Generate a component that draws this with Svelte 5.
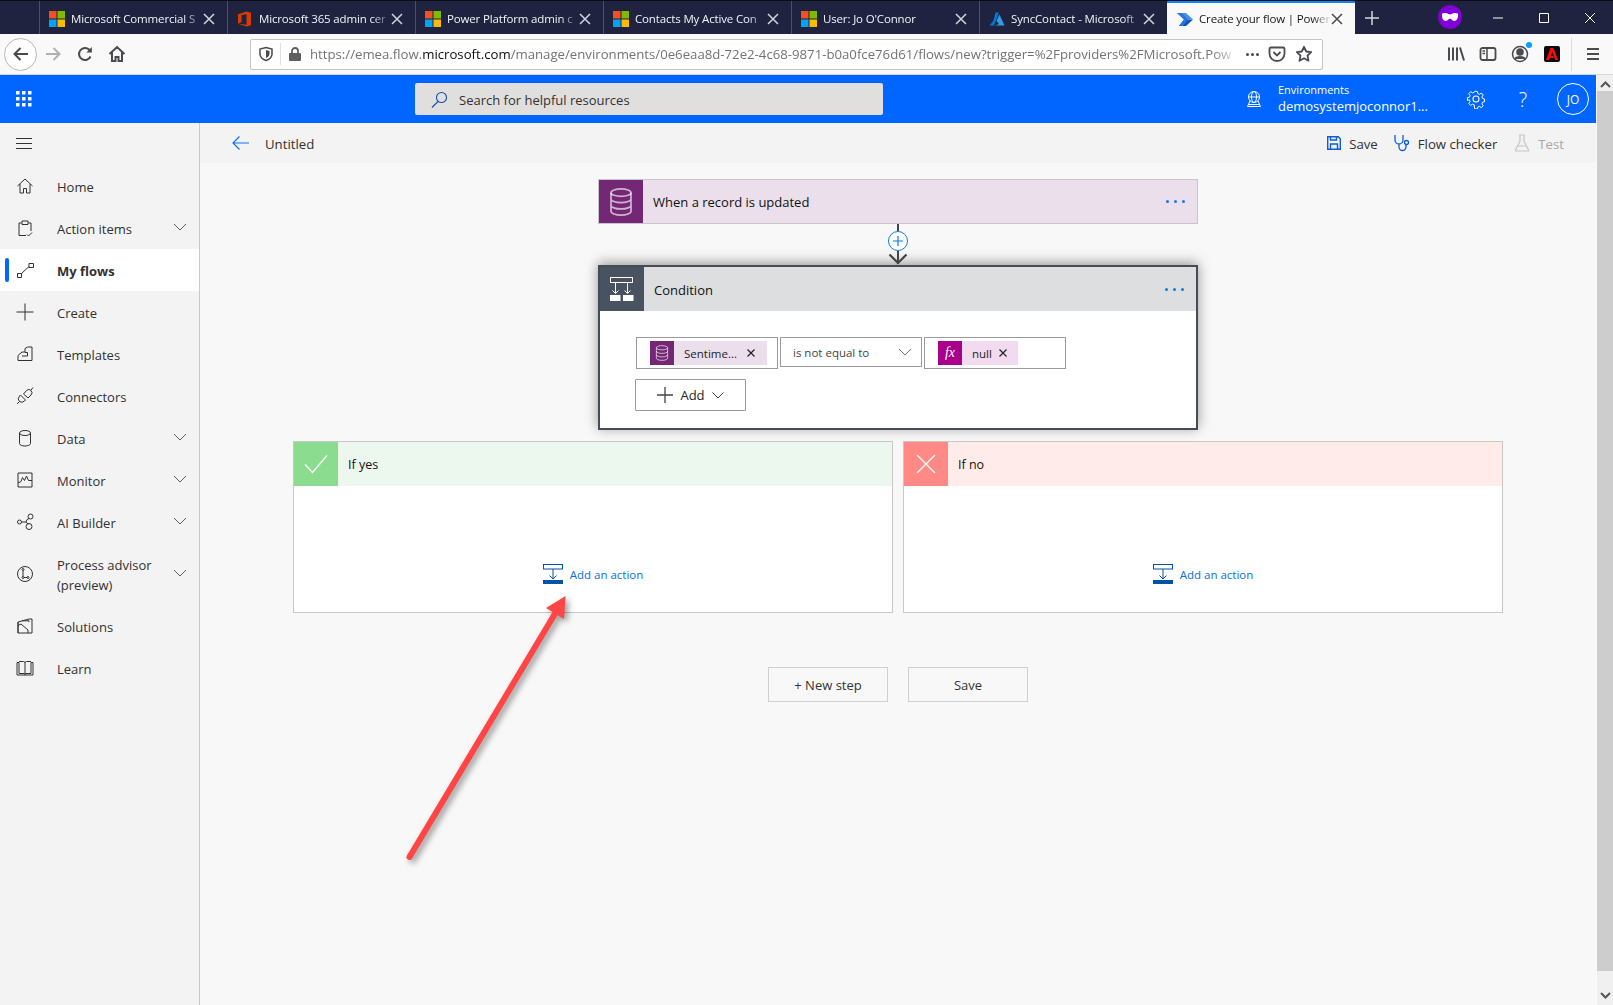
<script>
  const tabs = [
    { title: "Microsoft Commercial S", icon: "ms" },
    { title: "Microsoft 365 admin cer", icon: "office" },
    { title: "Power Platform admin c", icon: "ms" },
    { title: "Contacts My Active Con", icon: "ms" },
    { title: "User: Jo O'Connor", icon: "ms" },
    { title: "SyncContact - Microsoft", icon: "azure" },
    { title: "Create your flow | Power", icon: "flow", active: true }
  ];

  const nav = [
    { label: "Home", d: "M2.500 10L10 3l7.500 7M5 8v9h3.500v-4.500h3V17H15V8" },
    { label: "Action items", chevron: true, d: "M6.500 5H4v12.500h7M13.500 5H16v8M7 3h6v3.500H7zM12 16.500l1.500 1.500 3.500-3.500" },
    { label: "My flows", active: true, d: "M2.500 13.500h4v4h-4zM14 3.500h4.500v4H14zM6.500 13.500L14 6.500" },
    { label: "Create", d: "M1.500 10h17M10 1.500v17" },
    { label: "Templates", d: "M3 16.500v-5L7 8h3V4.500L12.500 3H17v13.500zM7 12h5.500V8.500H10" },
    { label: "Connectors", d: "M2 18l2.500-2.500M4.500 15.500a4 4 0 0 1 0-5.500l1-1 5 5-1 1a4 4 0 0 1-5 .5zM8.500 8l3-3.500a3 3 0 0 1 4.500 4.500l-3 3zM16 4l2-2.500" },
    { label: "Data", chevron: true, d: "M4.500 5a5.500 2.500 0 0 1 11 0v10.500a5.500 2.500 0 0 1-11 0zM4.500 5a5.500 2.500 0 0 0 11 0" },
    { label: "Monitor", chevron: true, d: "M3 3h14v14H3zM3 13l3-1.500 1.500-4 2 3 2-4.500 2 4.500H17" },
    { label: "AI Builder", chevron: true, d: "M2.500 10a2 2 0 1 0 4 0a2 2 0 1 0-4 0M13 4.500a2.500 2.500 0 1 0 5 0a2.500 2.500 0 1 0-5 0M11 14.500a3 3 0 1 0 6 0a3 3 0 1 0-6 0M6.500 10h4.500a4 4 0 0 1 3-3.500M11 10a4 4 0 0 0 2.500 2" },
    { label: "Process advisor (preview)", chevron: true, tall: true, d: "M2.500 10a7.500 7.500 0 1 0 15 0a7.500 7.500 0 1 0-15 0M8 6.500v6M9 13.500h3M7 5.500a1 1 0 1 0 2 0a1 1 0 1 0-2 0M7 13.500a1 1 0 1 0 2 0a1 1 0 1 0-2 0M12 13.500a1 1 0 1 0 2 0a1 1 0 1 0-2 0" },
    { label: "Solutions", d: "M3 6l11-3h3v14H3zM3 6v11M3 9.500l3-1.500 7 6v3M7 4.800h7V6" },
    { label: "Learn", d: "M2 4.500h2V15.500h5c.6 0 1 .5 1 1 0-.5.4-1 1-1h5V4.500h2V17H2zM4 3.500h4.500c.8 0 1.500.5 1.500 1.500v11.500M16 3.500h-4.500c-.8 0-1.500.5-1.500 1.500" }
  ];
</script>

{#snippet favicon(kind)}
  {#if kind === "ms"}
    <svg class="fav" viewBox="0 0 16 16">
      <rect x="0" y="0" width="7.500" height="7.500" fill="#f25022" />
      <rect x="8.500" y="0" width="7.500" height="7.500" fill="#7fba00" />
      <rect x="0" y="8.500" width="7.500" height="7.500" fill="#00a4ef" />
      <rect x="8.500" y="8.500" width="7.500" height="7.500" fill="#ffb900" />
    </svg>
  {:else if kind === "office"}
    <svg class="fav" viewBox="0 0 16 16">
      <path d="M1 3.300L9.500 .5L14 1.800V14.200L9.500 15.500L1 12.700L9.500 13.800V3L4.500 4.300V11.200L1 12.700Z" fill="#d83b01" />
    </svg>
  {:else if kind === "azure"}
    <svg class="fav" viewBox="0 0 16 16">
      <path d="M6.500 1.500H10L5 14.500H0.500L4.500 9.500Z" fill="#0078d4" />
      <path d="M10.500 3.500L15.500 14.500H6L10 13L7.500 10Z" fill="#2f9de8" />
    </svg>
  {:else}
    <svg class="fav" viewBox="0 0 16 16">
      <path d="M0 2H9L16 8.500H7Z" fill="#4a90ee" />
      <path d="M2 15L7 8.500H16L9 15Z" fill="#0f54b8" />
      <path d="M0 2L7 8.500L2 15H6L11 8.500L5 2Z" fill="#2a73e0" />
    </svg>
  {/if}
{/snippet}

{#snippet dbIcon(size)}
  <svg width={size} height={size} viewBox="0 0 24 24" fill="none" stroke="#fff" stroke-opacity=".65" stroke-width="1.300">
    <ellipse cx="12" cy="5" rx="7.500" ry="2.800" />
    <path d="M4.500 5v14c0 1.500 3.400 2.800 7.500 2.800s7.500-1.300 7.500-2.800V5M4.500 9.700c0 1.500 3.400 2.800 7.500 2.800s7.500-1.300 7.500-2.800M4.500 14.400c0 1.500 3.400 2.800 7.500 2.800s7.500-1.300 7.500-2.800" />
  </svg>
{/snippet}

{#snippet actionIcon()}
  <svg width="20" height="20" viewBox="0 0 20 20" fill="none" stroke="#0054a6">
    <rect x=".5" y=".5" width="19" height="4.500" />
    <path d="M10 5v10M6.500 11.500L10 15l3.500-3.500" />
    <rect x="0" y="16" width="20" height="4" fill="#0054a6" stroke="none" />
  </svg>
{/snippet}

{#snippet dots()}
  <span class="dots"><i></i><i></i><i></i></span>
{/snippet}

<div class="page">
  <div class="tabbar">
    {#each tabs as tab}
      <div class="tab" class:active={tab.active}>
        {@render favicon(tab.icon)}
        <span class="tab-title">{tab.title}</span>
        <svg class="tab-x" width="12" height="12" viewBox="0 0 12 12"><path d="M1 1l10 10M11 1L1 11" /></svg>
      </div>
    {/each}
    <div class="newtab">
      <svg width="14" height="14" viewBox="0 0 14 14"><path d="M7 0v14M0 7h14" stroke="#d8d8e0" stroke-width="1.500" /></svg>
    </div>
    <div class="private">
      <svg width="18" height="10" viewBox="0 0 18 10"><path d="M1 1.500C4 .5 6 1 9 2.500 12 1 14 .5 17 1.500c.5 4-1 7.500-4 7.500-2 0-2.500-2.500-4-2.500S7 9 5 9C2 9 .5 5.500 1 1.500Z" fill="#fff" /></svg>
    </div>
    <div class="winbtn"><svg width="12" height="12" viewBox="0 0 12 12"><path d="M1 6h10" /></svg></div>
    <div class="winbtn"><svg width="12" height="12" viewBox="0 0 12 12"><path d="M1.500 1.500h9v9h-9z" /></svg></div>
    <div class="winbtn"><svg width="12" height="12" viewBox="0 0 12 12"><path d="M1 1l10 10M11 1L1 11" /></svg></div>
  </div>

  <div class="toolbar">
    <div class="back-btn">
      <svg width="18" height="18" viewBox="0 0 18 18" fill="none" stroke="#4a4a4f" stroke-width="2"><path d="M16 9H3M8.500 3L2.500 9l6 6" /></svg>
    </div>
    <div class="tool">
      <svg width="18" height="18" viewBox="0 0 18 18" fill="none" stroke="#b1b1b3" stroke-width="2"><path d="M2 9h13M9.500 3l6 6-6 6" /></svg>
    </div>
    <div class="tool">
      <svg width="18" height="18" viewBox="0 0 18 18" fill="none" stroke="#4a4a4f" stroke-width="2"><path d="M14.500 11.500A6 6 0 1 1 13 4.500l2 2" /><path d="M15.800 2v5.500h-5.500z" fill="#4a4a4f" stroke="none" /></svg>
    </div>
    <div class="tool">
      <svg width="18" height="18" viewBox="0 0 18 18" fill="none" stroke="#4a4a4f" stroke-width="2"><path d="M1.500 9L9 2l7.500 7M4 7.500V16h3.500v-4h3v4H14V7.500" /></svg>
    </div>

    <div class="urlbar">
      <svg class="shield" width="16" height="16" viewBox="0 0 16 16"><path d="M8 1.500L14 3v5c0 3.300-2.800 5.400-6 6.500C4.800 13.400 2 11.300 2 8V3Z" fill="none" stroke="#4a4a4f" stroke-width="1.500" /><path d="M8 4l3.500 1v3c0 2-1.700 3.300-3.500 4Z" fill="#4a4a4f" /></svg>
      <span class="url-sep"></span>
      <svg class="lock" width="12" height="14" viewBox="0 0 12 14"><path d="M3 6V4a3 3 0 0 1 6 0v2" fill="none" stroke="#5f5f62" stroke-width="1.800" /><rect x="0" y="6" width="12" height="8" rx="1" fill="#5f5f62" /></svg>
      <span class="url">https://emea.flow.<b>microsoft.com</b>/manage/environments/0e6eaa8d-72e2-4c68-9871-b0a0fce76d61/flows/new?trigger=%2Fproviders%2FMicrosoft.Pow</span>
      <span class="url-more"><i></i><i></i><i></i></span>
      <svg width="18" height="18" viewBox="0 0 18 18" fill="none" stroke="#4a4a4f" stroke-width="1.800"><path d="M3 2.500h12a1.500 1.500 0 0 1 1.500 1.500v4.500a7.500 7.500 0 0 1-15 0V4A1.500 1.500 0 0 1 3 2.500Z" /><path d="M5.500 7L9 10.500 12.500 7" /></svg>
      <svg class="star" width="18" height="18" viewBox="0 0 18 18" fill="none" stroke="#4a4a4f" stroke-width="1.800" stroke-linejoin="round"><path d="M9 1.800l2.200 4.700 5 .6-3.700 3.500 1 5.100L9 13.200l-4.500 2.500 1-5.100L1.800 7.100l5-.6Z" /></svg>
    </div>

    <div class="tool first-right">
      <svg width="18" height="18" viewBox="0 0 18 18" fill="none" stroke="#4a4a4f" stroke-width="2"><path d="M2 2.500v13M6 2.500v13M10 2.500v13M13 2.500l4 13" /></svg>
    </div>
    <div class="tool">
      <svg width="18" height="18" viewBox="0 0 18 18" fill="none" stroke="#4a4a4f" stroke-width="1.800"><rect x="1.500" y="3" width="15" height="12" rx="2" /><path d="M8 3v12M3.500 6H6M3.500 8.500H6" stroke-width="1.500" /></svg>
    </div>
    <div class="tool acct">
      <svg width="18" height="18" viewBox="0 0 18 18" fill="none" stroke="#4a4a4f" stroke-width="1.500"><circle cx="9" cy="9" r="7.500" /><circle cx="9" cy="7" r="3" fill="#4a4a4f" /><path d="M4 14c1-3 9-3 10 0" fill="#4a4a4f" /></svg>
      <span class="acct-dot"></span>
    </div>
    <div class="tool">
      <span class="adobe">
        <svg width="12" height="12" viewBox="0 0 12 12"><path d="M4.500 0h3L12 12H9.200L6.300 4 4.800 8H7l.8 2H4L3 12H0Z" fill="#f40f02" /></svg>
      </span>
    </div>
    <span class="tool-sep"></span>
    <div class="tool">
      <svg width="16" height="16" viewBox="0 0 16 16" stroke="#4a4a4f" stroke-width="2"><path d="M2 3h12M2 8h12M2 13h12" /></svg>
    </div>
  </div>

  <div class="app">
    <div class="app-main">
      <header class="topbar">
        <div class="waffle">
          <svg width="16" height="16" viewBox="0 0 16 16" fill="#fff">
            {#each [0, 6, 12] as y}
              {#each [0, 6, 12] as x}
                <rect {x} {y} width="3.500" height="3.500" />
              {/each}
            {/each}
          </svg>
        </div>
        <div class="search">
          <svg width="17" height="17" viewBox="0 0 17 17" fill="none" stroke="#0f4fb5" stroke-width="1.100"><circle cx="10.500" cy="6.500" r="5" /><path d="M7 10.500L1 16.500" /></svg>
          <span>Search for helpful resources</span>
        </div>
        <svg class="env-icon" width="18" height="18" viewBox="0 0 18 18" fill="none" stroke="#fff"><circle cx="9" cy="7" r="5.500" /><ellipse cx="9" cy="7" rx="2.500" ry="5.500" /><path d="M3.500 7h11M5 11l-2.500 5.500h13L13 11M3 14.500h12" /></svg>
        <div class="env">
          <div class="env-label">Environments</div>
          <div class="env-name">demosystemjoconnor1...</div>
        </div>
        <div class="top-btn">
          <svg width="20" height="20" viewBox="0 0 20 20" fill="none" stroke="#fff" stroke-width="1.100"><circle cx="10" cy="10" r="3" /><path d="M8.500 1.500h3l.5 2.500 1.800.8 2.200-1.400 2 2.100-1.400 2.200.7 1.800 2.200.5v3l-2.200.5-.7 1.800 1.400 2.200-2 2.100-2.200-1.400-1.800.7-.5 2.100h-3L8 16.400l-1.800-.7-2.200 1.400-2-2.100 1.400-2.200-.7-1.800L.5 11.500v-3L2.700 8l.7-1.800L2 4l2-2.100 2.200 1.400L8 2.500Z" transform="translate(1 1) scale(.9)" /></svg>
        </div>
        <div class="top-btn help">?</div>
        <div class="avatar">JO</div>
      </header>

      <div class="body">
        <nav class="sidebar">
          <div class="burger">
            <svg width="16" height="12" viewBox="0 0 16 12" stroke="#323130"><path d="M0 .5h16M0 5.500h16M0 10.500h16" /></svg>
          </div>
          {#each nav as item}
            <div class="nav-item" class:active={item.active} class:tall={item.tall}>
              <svg class="nav-icon" width="20" height="20" viewBox="0 0 20 20" fill="none" stroke="#323130"><path d={item.d} /></svg>
              <span class="nav-label">{item.label}</span>
              {#if item.chevron}
                <svg class="chev" width="14" height="8" viewBox="0 0 14 8" fill="none" stroke="#605e5c"><path d="M1 1l6 6 6-6" /></svg>
              {/if}
            </div>
          {/each}
        </nav>

        <main class="main">
          <div class="cmdbar">
            <svg width="17" height="14" viewBox="0 0 17 14" fill="none" stroke="#0f6fff" stroke-width="1.200"><path d="M17 7H1M7.500 .5L1 7l6.500 6.500" /></svg>
            <span class="flow-name">Untitled</span>
            <div class="cmd first">
              <svg width="14" height="14" viewBox="0 0 14 14" fill="none" stroke="#0b5ed7" stroke-width="1.400"><path d="M.7.700h10.600l2 2v10.600H.700zM3.500 13V8h7v5M3.500 1v3h6V1" /></svg>
              <span>Save</span>
            </div>
            <div class="cmd">
              <svg width="16" height="18" viewBox="0 0 16 18" fill="none" stroke="#0b5ed7" stroke-width="1.300"><path d="M1 1v5a4 4 0 0 0 8 0V1M5 10v3a3.500 3.500 0 0 0 7 0v-2" /><circle cx="12.500" cy="8.500" r="2" /></svg>
              <span>Flow checker</span>
            </div>
            <div class="cmd off">
              <svg width="16" height="18" viewBox="0 0 16 18" fill="none" stroke="#c8c6c4" stroke-width="1.200"><path d="M5 1h6M6 1v6L1.500 16c-.3.600 0 1 .5 1h12c.5 0 .8-.4.500-1L10 7V1M4 12h8" /></svg>
              <span>Test</span>
            </div>
          </div>

          <div class="canvas">
            <div class="card trigger">
              <div class="card-icon">{@render dbIcon(32)}</div>
              <span class="card-title">When a record is updated</span>
              {@render dots()}
            </div>

            <svg class="connector" width="24" height="41" viewBox="0 0 24 41" fill="none">
              <path d="M12 0v7M12 27v13" stroke="#444" stroke-width="2" />
              <path d="M3.500 30.500L12 39l8.500-8.500" stroke="#444" stroke-width="2.200" />
              <circle cx="12" cy="17" r="9.500" fill="#fff" stroke="#0a7ce8" />
              <path d="M7 17h10M12 12v10" stroke="#0a7ce8" stroke-width="1.200" />
            </svg>

            <div class="card condition">
              <div class="cond-head">
                <div class="card-icon dark">
                  <svg width="24" height="24" viewBox="0 0 24 24" fill="none" stroke="#fff">
                    <rect x=".5" y=".5" width="22" height="5" />
                    <path d="M5.500 6v10M17.500 6v10M2.500 13.500l3 3 3-3M14.500 13.500l3 3 3-3" />
                    <rect x="0" y="18" width="10.500" height="6" fill="#fff" stroke="none" />
                    <rect x="13" y="18" width="10.500" height="6" fill="#fff" stroke="none" />
                  </svg>
                </div>
                <span class="card-title">Condition</span>
                {@render dots()}
              </div>
              <div class="cond-body">
                <div class="cond-row">
                  <div class="field tall">
                    <span class="token">
                      <span class="token-icon db">{@render dbIcon(18)}</span>
                      <span class="token-text">Sentime...</span>
                      <svg class="token-x" width="8" height="8" viewBox="0 0 8 8" stroke="#222" stroke-width="1.200"><path d="M.5.500l7 7M7.500.500l-7 7" /></svg>
                    </span>
                  </div>
                  <div class="field select">
                    <span>is not equal to</span>
                    <svg width="14" height="8" viewBox="0 0 14 8" fill="none" stroke="#767676"><path d="M1 1l6 6 6-6" /></svg>
                  </div>
                  <div class="field tall">
                    <span class="token pink">
                      <span class="token-icon fx">fx</span>
                      <span class="token-text">null</span>
                      <svg class="token-x" width="8" height="8" viewBox="0 0 8 8" stroke="#222" stroke-width="1.200"><path d="M.5.500l7 7M7.500.500l-7 7" /></svg>
                    </span>
                  </div>
                </div>
                <div class="add-btn">
                  <svg width="16" height="16" viewBox="0 0 16 16" stroke="#444" stroke-width="1.300"><path d="M0 8h16M8 0v16" /></svg>
                  <span>Add</span>
                  <svg width="12" height="7" viewBox="0 0 12 7" fill="none" stroke="#444"><path d="M.5.500L6 6l5.500-5.500" /></svg>
                </div>
              </div>
            </div>

            <div class="branches">
              <div class="branch">
                <div class="branch-head yes">
                  <div class="branch-icon">
                    <svg width="24" height="20" viewBox="0 0 24 20" fill="none" stroke="#fff" stroke-width="1.300"><path d="M1 10.500L8.500 18.500 23 1.500" /></svg>
                  </div>
                  <span>If yes</span>
                </div>
                <div class="branch-body">
                  {@render actionIcon()}
                  <span>Add an action</span>
                </div>
              </div>
              <div class="branch">
                <div class="branch-head no">
                  <div class="branch-icon">
                    <svg width="20" height="20" viewBox="0 0 20 20" fill="none" stroke="#fff" stroke-width="1.300"><path d="M1 1l18 18M19 1L1 19" /></svg>
                  </div>
                  <span>If no</span>
                </div>
                <div class="branch-body">
                  {@render actionIcon()}
                  <span>Add an action</span>
                </div>
              </div>
            </div>

            <div class="foot">
              <div class="foot-btn">+ New step</div>
              <div class="foot-btn">Save</div>
            </div>
          </div>
        </main>
      </div>
    </div>

    <div class="scrollbar">
      <svg width="11" height="7" viewBox="0 0 11 7" fill="none" stroke="#555" stroke-width="2"><path d="M1 6l4.500-4.500L10 6" /></svg>
      <div class="thumb"></div>
      <svg width="11" height="7" viewBox="0 0 11 7" fill="none" stroke="#555" stroke-width="2"><path d="M1 1l4.500 4.500L10 1" /></svg>
    </div>
  </div>

  <!-- annotation drawn on top of the screenshot -->
  <svg class="annotation" width="1613" height="1005" viewBox="0 0 1613 1005">
    <path d="M409.500 857L556 612" stroke="#ff4545" stroke-width="6" stroke-linecap="round" />
    <path d="M565.600 596L546 608L564 619Z" fill="#ff4545" />
  </svg>
</div>

<style>
  :global(body) {
    margin: 0;
    overflow: hidden;
    font-family: "Open Sans", "Noto Sans", "Liberation Sans", sans-serif;
    color: #323130;
  }

  .page {
    position: relative;
    width: 1613px;
    height: 1005px;
    display: flex;
    flex-direction: column;
    overflow: hidden;
  }

  /* browser chrome */
  .tabbar {
    height: 33px;
    border-top: 1px solid #0c0c14;
    background: #1f2340;
    display: flex;
    padding-left: 39px;
  }

  .tab {
    width: 188px;
    flex: none;
    box-sizing: border-box;
    border-left: 1px solid #4c4f68;
    padding: 2px 10px 0 9px;
    display: flex;
    align-items: center;
    gap: 6px;
    color: #f3f3f6;
    font-size: 11.500px;
    letter-spacing: -0.15px;
  }

  .tab.active {
    background: #f9f9fa;
    color: #18181a;
    border-left: 0;
    border-top: 2px solid #0a84ff;
    width: 188px;
    padding: 0 10px 0 10px;
  }

  .tab-title {
    flex: 1;
    min-width: 0;
    margin-right: -9px;
    white-space: nowrap;
    overflow: hidden;
    mask-image: linear-gradient(to right, #000 85%, transparent);
  }

  .tab-x {
    margin: 0 2px;
    fill: none;
    stroke: #d4d4dc;
    stroke-width: 1.500;
    flex: none;
  }

  .active .tab-x {
    stroke: #4a4a4f;
  }

  .fav {
    width: 16px;
    height: 16px;
    flex: none;
  }

  .newtab {
    width: 34px;
    flex: none;
    display: flex;
    align-items: center;
    justify-content: center;
  }

  .private {
    width: 24px;
    height: 24px;
    border-radius: 50%;
    background: #8000d7;
    margin: 4px 13px 0 auto;
    display: flex;
    align-items: center;
    justify-content: center;
  }

  .winbtn {
    width: 46px;
    flex: none;
    display: flex;
    align-items: center;
    justify-content: center;
    fill: none;
    stroke: #fff;
  }

  .toolbar {
    height: 40px;
    background: #f9f9fa;
    border-bottom: 1px solid #d7d7db;
    display: flex;
    align-items: center;
    padding-left: 4px;
  }

  .back-btn {
    width: 31px;
    height: 31px;
    border: 1px solid #b9b9bb;
    border-radius: 50%;
    background: #fff;
    display: flex;
    align-items: center;
    justify-content: center;
  }

  .tool {
    width: 32px;
    height: 32px;
    display: flex;
    align-items: center;
    justify-content: center;
    position: relative;
    flex: none;
  }

  .urlbar {
    width: 1071px;
    height: 29px;
    margin-left: 117px;
    background: #fff;
    border: 1px solid #c4c4c6;
    border-radius: 2px;
    display: flex;
    align-items: center;
    box-sizing: content-box;
  }

  .shield {
    margin-left: 7px;
    flex: none;
  }

  .url-sep {
    width: 1px;
    height: 22px;
    background: #e0e0e2;
    margin: 0 8px 0 6px;
  }

  .lock {
    flex: none;
  }

  .url {
    width: 930px;
    flex: none;
    margin-left: 9px;
    font-size: 13.200px;
    color: #737373;
    white-space: nowrap;
    overflow: hidden;
    mask-image: linear-gradient(to right, #000 97%, transparent);
  }

  .url b {
    font-weight: 400;
    color: #0c0c0d;
  }

  .url-more {
    display: flex;
    gap: 2px;
    margin: 0 9px 0 6px;
  }

  .url-more i {
    width: 3px;
    height: 3px;
    border-radius: 50%;
    background: #4a4a4f;
  }

  .star {
    margin-left: 9px;
  }

  .first-right {
    margin-left: 117px;
  }

  .acct-dot {
    position: absolute;
    right: 4px;
    top: 4px;
    width: 6px;
    height: 6px;
    border-radius: 50%;
    background: #0a9eff;
  }

  .adobe {
    width: 16px;
    height: 16px;
    background: #0b0b14;
    border-radius: 2px;
    display: flex;
    align-items: center;
    justify-content: center;
  }

  .tool-sep {
    width: 1px;
    height: 33px;
    background: #dcdcde;
    margin: 0 5px 0 3px;
  }

  /* app */
  .app {
    flex: 1;
    display: flex;
    min-height: 0;
  }

  .app-main {
    flex: 1;
    display: flex;
    flex-direction: column;
    min-width: 0;
  }

  .topbar {
    height: 48px;
    background: #0066ff;
    display: flex;
    align-items: center;
    color: #fff;
    flex: none;
  }

  .waffle {
    width: 48px;
    display: flex;
    justify-content: center;
  }

  .search {
    width: 468px;
    height: 32px;
    margin-left: 367px;
    background: #e1dfdd;
    border-radius: 2px;
    display: flex;
    align-items: center;
    gap: 11px;
    padding-left: 16px;
    box-sizing: border-box;
    font-size: 13px;
    color: #323130;
  }

  .search span {
    padding-top: 1px;
  }

  .env-icon {
    margin-left: 362px;
    flex: none;
  }

  .env {
    width: 180px;
    margin-left: 15px;
    flex: none;
  }

  .env-label {
    font-size: 11px;
    line-height: 15px;
  }

  .env-name {
    font-size: 13px;
    line-height: 19px;
  }

  .top-btn {
    width: 36px;
    display: flex;
    justify-content: center;
    flex: none;
  }

  .help {
    margin-left: 11px;
    font-size: 20px;
    font-weight: 300;
  }

  .avatar {
    width: 30px;
    height: 30px;
    margin-left: 16px;
    border: 1px solid #fff;
    border-radius: 50%;
    display: flex;
    align-items: center;
    justify-content: center;
    font-size: 12px;
    flex: none;
  }

  .body {
    flex: 1;
    display: flex;
    min-height: 0;
  }

  .sidebar {
    width: 199px;
    flex: none;
    background: #f3f3f3;
    border-right: 1px solid #c8c8c8;
    font-size: 13px;
  }

  .burger {
    height: 42px;
    display: flex;
    align-items: center;
    padding-left: 16px;
  }

  .nav-item {
    position: relative;
    height: 42px;
    display: flex;
    align-items: center;
    padding-left: 15px;
    color: #323130;
  }

  .nav-item.tall {
    height: 62px;
    line-height: 20px;
  }

  .nav-item.active {
    background: #fff;
    font-weight: 700;
  }

  .nav-item.active::before {
    content: "";
    position: absolute;
    left: 5px;
    top: 9px;
    bottom: 9px;
    width: 4px;
    border-radius: 2px;
    background: #0066ff;
  }

  .nav-icon {
    flex: none;
  }

  .nav-label {
    margin-left: 22px;
    width: 105px;
    padding-top: 1px;
  }

  .chev {
    margin-left: 11px;
    margin-top: -2px;
  }

  .main {
    flex: 1;
    display: flex;
    flex-direction: column;
    min-width: 0;
    background: #f8f8f8;
  }

  .cmdbar {
    height: 40px;
    flex: none;
    background: #f3f3f3;
    display: flex;
    align-items: center;
    padding: 0 32px 0 32px;
    font-size: 13.200px;
  }

  .flow-name {
    margin-left: 16px;
    padding-top: 1px;
  }

  .cmd {
    display: flex;
    align-items: center;
    gap: 8px;
    margin-left: 16px;
  }

  .cmd span {
    padding-top: 1px;
  }

  .cmd.first {
    margin-left: auto;
  }

  .cmd.off {
    color: #a6a6a6;
    margin-left: 17px;
  }

  .canvas {
    flex: 1;
    display: flex;
    flex-direction: column;
    align-items: center;
    padding-top: 16px;
  }

  .card {
    width: 600px;
    box-sizing: border-box;
    background: #fff;
    flex: none;
  }

  .trigger {
    height: 45px;
    border: 1px solid #c8c6c8;
    background: #ecdfec;
    display: flex;
    align-items: center;
    color: #111;
  }

  .card-icon {
    width: 44px;
    height: 100%;
    background: #742774;
    display: flex;
    align-items: center;
    justify-content: center;
    flex: none;
  }

  .card-icon.dark {
    background: #485260;
  }

  .card-title {
    margin-left: 10px;
    padding-top: 1px;
    font-size: 13px;
    flex: 1;
  }

  .dots {
    display: flex;
    gap: 5px;
    margin-right: 12px;
  }

  .dots i {
    width: 3px;
    height: 3px;
    border-radius: 50%;
    background: #0a7ce8;
  }

  .connector {
    display: block;
    flex: none;
    position: relative;
    z-index: 1;
    margin-left: -1px;
  }

  .condition {
    height: 165px;
    border: 2px solid #444c58;
    box-shadow: 0 -2px 12px rgba(0, 0, 0, 0.4);
  }

  .cond-head {
    height: 44px;
    background: #dcdee0;
    display: flex;
    align-items: center;
    color: #111;
  }

  .cond-body {
    padding: 26px 0 0 36px;
    background: #fff;
  }

  .cond-row {
    display: flex;
    align-items: flex-start;
    gap: 2px;
  }

  .field {
    width: 142px;
    height: 30px;
    box-sizing: border-box;
    border: 1px solid #9a9a9a;
    background: #fff;
    display: flex;
    align-items: center;
    font-size: 11.500px;
  }

  .field.tall {
    height: 32px;
    padding-left: 13px;
  }

  .select {
    justify-content: space-between;
    padding: 0 9px 0 12px;
    color: #444;
  }

  .token {
    height: 24px;
    display: flex;
    align-items: center;
    width: 117px;
    background: #ecdfec;
    color: #222;
    font-size: 11.500px;
  }

  .token.pink {
    width: 80px;
    background: #f2dbf0;
  }

  .token-icon {
    width: 24px;
    height: 24px;
    flex: none;
    display: flex;
    align-items: center;
    justify-content: center;
    color: #fff;
  }

  .token-icon.db {
    background: #742774;
  }

  .token-icon.fx {
    background: #a8008a;
    font-family: "Liberation Serif", serif;
    font-style: italic;
    font-size: 14px;
  }

  .token-text {
    margin-left: 10px;
    flex: 1;
  }

  .token-x {
    margin-right: 12px;
  }

  .token.pink .token-x {
    margin-right: 11px;
  }

  .add-btn {
    width: 109px;
    height: 30px;
    margin: 10px 0 0 -1px;
    border: 1px solid #9a9a9a;
    border-radius: 1px;
    display: flex;
    align-items: center;
    justify-content: center;
    gap: 7px;
    font-size: 13px;
    color: #222;
  }

  .branches {
    display: flex;
    gap: 10px;
    margin-top: 11px;
  }

  .branch {
    width: 600px;
    height: 172px;
    box-sizing: border-box;
    border: 1px solid #c8c8c8;
    background: #fff;
    display: flex;
    flex-direction: column;
  }

  .branch-head {
    height: 44px;
    display: flex;
    align-items: center;
    font-size: 12.500px;
    color: #111;
  }

  .branch-head span {
    margin-left: 10px;
  }

  .branch-head.yes {
    background: #ecf7ee;
  }

  .branch-head.no {
    background: #ffecea;
  }

  .branch-icon {
    width: 44px;
    height: 100%;
    display: flex;
    align-items: center;
    justify-content: center;
  }

  .yes .branch-icon {
    background: #8bdc8f;
  }

  .no .branch-icon {
    background: #ff8a85;
  }

  .branch-body {
    flex: 1;
    display: flex;
    align-items: flex-end;
    justify-content: center;
    gap: 7px;
    padding-bottom: 28px;
    font-size: 11.500px;
    color: #0a6fd8;
  }

  .branch-body span {
    line-height: 19px;
  }

  .foot {
    display: flex;
    gap: 20px;
    margin-top: 54px;
  }

  .foot-btn {
    width: 120px;
    height: 35px;
    box-sizing: border-box;
    border: 1px solid #d0d0d0;
    display: flex;
    align-items: center;
    justify-content: center;
    font-size: 13px;
    color: #333;
  }

  .scrollbar {
    width: 16px;
    margin-left: 1px;
    background: #f0f0f0;
    display: flex;
    flex-direction: column;
    align-items: center;
    justify-content: space-between;
    padding: 6px 0;
    box-sizing: border-box;
    box-shadow: -1px 0 0 #fafafa;
  }

  .thumb {
    flex: 1;
    width: 100%;
    background: #cdcdcd;
    margin: 3px 0 21px;
  }

  .annotation {
    position: absolute;
    left: 0;
    top: 0;
    pointer-events: none;
    filter: drop-shadow(3px 3px 3px rgba(0, 0, 0, 0.4));
  }
</style>
